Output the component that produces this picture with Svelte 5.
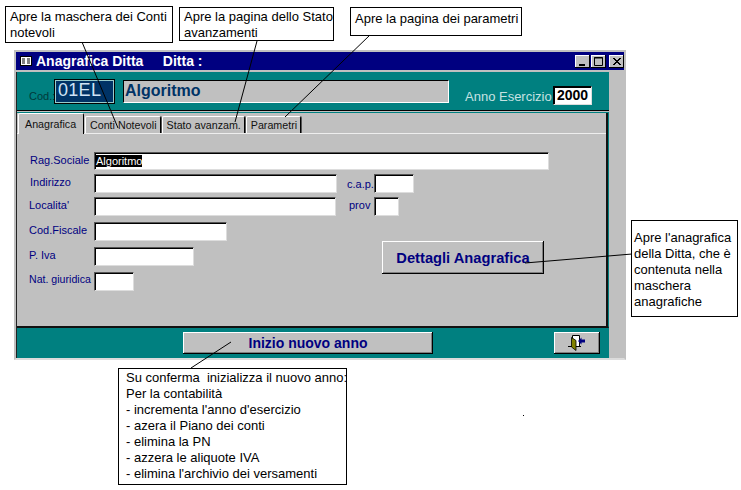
<script>
const notes = [
  { cls: 'n1', lines: ['Apre la maschera dei Conti', 'notevoli'] },
  { cls: 'n2', lines: ['Apre la pagina dello Stato', 'avanzamenti'] },
  { cls: 'n3', lines: ['Apre la pagina dei parametri'] },
  { cls: 'n4', lines: ["Apre l'anagrafica", 'della Ditta, che è', 'contenuta nella', 'maschera', 'anagrafiche'] },
  { cls: 'n5', lines: ['Su conferma  inizializza il nuovo anno:', 'Per la contabilità', "- incrementa l'anno d'esercizio", '- azera il Piano dei conti', '- elimina la PN', '- azzera le aliquote IVA', "- elimina l'archivio dei versamenti"] }
];
const leaders = [
  [82, 42, 118, 128],
  [257, 41, 235, 122],
  [370, 35, 285, 117],
  [525, 263, 632, 254],
  [231, 342, 191, 368]
];
const tabs = ['Conti Notevoli', 'Stato avanzam.', 'Parametri'];
</script>

<div class="canvas">
  <div class="window">
    <div class="titlebar">
      <svg class="formicon" width="12" height="10" viewBox="0 0 12 10">
        <rect x="0.5" y="0.5" width="11" height="9" fill="#fff" stroke="#000"/>
        <path d="M2 3h3M7 3h3M2 5h3M7 5h3M2 7h3M7 7h3" stroke="#000"/>
      </svg>
      <span class="title">Anagrafica Ditta     Ditta :</span>
      <div class="winbtns">
        <span class="wbtn"><svg width="15" height="13"><rect x="4" y="9" width="6" height="2" fill="#000"/></svg></span>
        <span class="wbtn"><svg width="15" height="13"><path d="M3.500 2.500h8v8h-8z M3 3h9" fill="none" stroke="#000"/></svg></span>
        <span class="wbtn close"><svg width="15" height="13"><path d="M4 3l7 7M5 3l7 7M11 3l-7 7M12 3l-7 7" stroke="#000"/></svg></span>
      </div>
    </div>

    <div class="body">
      <div class="main">
        <div class="header">
          <span class="codlabel">Cod.:</span>
          <span class="cod">01EL</span>
          <span class="ragione">Algoritmo</span>
          <span class="annolabel">Anno Esercizio</span>
          <span class="anno">2000</span>
        </div>

        <div class="page">
          <div class="tabs">
            <span class="tab active">Anagrafica</span>
            {#each tabs as t}
              <span class="tab">{t}</span>
            {/each}
          </div>

          <div class="form">
            <div class="row first">
              <span class="lab">Rag.Sociale</span>
              <span class="field w-rag"><em class="sel">Algoritmo</em></span>
            </div>
            <div class="row r2">
              <span class="lab">Indirizzo</span>
              <span class="field w-ind"></span>
              <span class="lab small">c.a.p.</span>
              <span class="field w-40"></span>
            </div>
            <div class="row r3">
              <span class="lab left">Localita'</span>
              <span class="field w-loc"></span>
              <span class="lab small prov">prov</span>
              <span class="field w-prov"></span>
            </div>
            <div class="lower">
              <div class="lowerfields">
                <div class="row">
                  <span class="lab left">Cod.Fiscale</span>
                  <span class="field w-cf"></span>
                </div>
                <div class="row">
                  <span class="lab left">P. Iva</span>
                  <span class="field w-iva"></span>
                </div>
                <div class="row">
                  <span class="lab left nat">Nat. giuridica</span>
                  <span class="field w-40"></span>
                </div>
              </div>
              <button class="btn dettagli">Dettagli Anagrafica</button>
            </div>
          </div>
        </div>

        <div class="footer">
          <button class="btn nuovo">Inizio nuovo anno</button>
          <button class="btn exit" aria-label="Esci">
            <svg width="18" height="16" viewBox="0 0 18 16">
              <path d="M4.500 0.500h7v11h-7z" fill="#fff" stroke="#000"/>
              <path d="M0 11.500h13" stroke="#000"/>
              <path d="M3.500 2.500l4.500 3v10l-4.500-3.500z" fill="#808000" stroke="#000" stroke-width="0.8"/>
              <path d="M10 6l3.500-3.500v2h3.500v3h-3.500v2z" fill="#000080"/>
            </svg>
          </button>
        </div>
      </div>
      <div class="strip"></div>
    </div>
  </div>

  {#each notes as n}
    <div class="note {n.cls}">
      {#each n.lines as l}
        <div>{l}</div>
      {/each}
    </div>
  {/each}

  <svg class="leaders" width="741" height="490">
    {#each leaders as [x1, y1, x2, y2]}
      <line {x1} {y1} {x2} {y2} stroke="#000" stroke-width="1"/>
    {/each}
    <rect x="523" y="415" width="1" height="1" fill="#000"/>
  </svg>
</div>

<style>
:global(body) {
  background: #fff;
  font-family: "Liberation Sans", Arial, sans-serif;
}
.canvas {
  position: relative;
  width: 741px;
  height: 490px;
  overflow: hidden;
}

/* the screenshot window */
.window {
  position: absolute;
  left: 14px;
  top: 50px;
  width: 612px;
  height: 310px;
  box-sizing: border-box;
  border: 2px solid #c0c0c0;
  border-bottom-color: #dcdcdc;
  background: #c0c0c0;
  display: flex;
  flex-direction: column;
}
.titlebar {
  height: 18px;
  flex: none;
  background: #000080;
  color: #fff;
  display: flex;
  align-items: center;
  padding-left: 4px;
}
.formicon { flex: none; }
.title {
  margin-left: 4px;
  font-size: 14px;
  font-weight: bold;
  white-space: pre;
}
.winbtns {
  margin-left: auto;
  display: flex;
}
.wbtn {
  width: 15px;
  height: 13px;
  background: #c0c0c0;
  box-shadow: inset -1px -1px 0 #000, inset 1px 1px 0 #fff;
  margin-right: 1px;
  display: block;
}
.wbtn svg { display: block; }
.wbtn.close { margin-left: 2px; margin-right: 0; }

.body {
  flex: 1;
  display: flex;
  min-height: 0;
  margin-top: 2px;
}
.main {
  width: 593px;
  flex: none;
  display: flex;
  flex-direction: column;
  border-left: 1px solid #222;
  box-sizing: border-box;
}
.strip { flex: 1; background: #c0c0c0; }

.header {
  flex: none;
  box-sizing: border-box;
  background: #008080;
  border-bottom: 1px solid #000;
  height: 39px;
  display: flex;
}
.codlabel {
  font-size: 11px;
  color: #003a3a;
  margin: 18px 0 0 12px;
  width: 25px;
  white-space: nowrap;
}
.cod {
  width: 61px;
  height: 25px;
  margin-top: 7px;
  box-sizing: border-box;
  background: #003366;
  border: 1px solid #000;
  box-shadow: inset 0 0 0 1px #9cc;
  color: #cfe3f5;
  font-size: 18px;
  letter-spacing: 0.3px;
  line-height: 21px;
  padding-left: 3px;
}
.ragione {
  width: 326px;
  height: 23px;
  margin: 8px 0 0 8px;
  box-sizing: border-box;
  background: #c0c0c0;
  border: 1px solid;
  border-color: #000 #fff #fff #000;
  color: #003366;
  font-size: 16px;
  font-weight: bold;
  line-height: 20px;
  padding-left: 1px;
}
.annolabel {
  font-size: 13px;
  color: #c6e2e2;
  margin: 17px 0 0 16px;
  width: 88px;
  white-space: nowrap;
}
.anno {
  width: 39px;
  height: 19px;
  margin-top: 14px;
  box-sizing: border-box;
  background: #fff;
  border: 1px solid;
  border-color: #000 #ddd #ddd #000;
  box-shadow: inset 1px 1px 0 #000;
  font-size: 14px;
  font-weight: bold;
  line-height: 17px;
  text-align: center;
  color: #000;
}

.page {
  flex: 1;
  min-height: 0;
  margin-top: 1px;
  background: #c0c0c0;
  border-top: 1px solid #008080;
  border-right: 1px solid #008080;
  border-bottom: 2px solid #111;
  box-sizing: border-box;
  box-shadow: inset -2px 0 0 #111;
  display: flex;
  flex-direction: column;
}
.tabs {
  display: flex;
  align-items: flex-end;
  height: 20px;
  flex: none;
  border-bottom: 1px solid #eee;
  margin-right: 2px;
}
.tab {
  box-sizing: border-box;
  height: 17px;
  font-size: 10.700px;
  line-height: 17px;
  color: #111;
  white-space: nowrap;
  padding: 0 3px 0 4px;
  margin-left: 1px;
  border-top: 1px solid #fff;
  border-left: 1px solid #fff;
  border-right: 1px solid #000;
  box-shadow: 1px 0 0 #555;
  border-radius: 2px 2px 0 0;
}
.tab.active {
  height: 21px;
  margin-bottom: -1px;
  position: relative;
  background: #c0c0c0;
  padding: 2px 6px 0 6px;
  box-shadow: none;
  width: 66px;
}
.form {
  padding: 18px 0 0 12px;
  display: flex;
  flex-direction: column;
}
.row {
  display: flex;
  align-items: flex-start;
}
.r2, .r3 { margin-top: 4px; }
.lab {
  font-size: 11px;
  color: #000080;
  width: 64px;
  margin-left: 1px;
  flex: none;
  line-height: 16px;
  white-space: nowrap;
}
.lab.left { width: 65px; margin-left: 0; }
.lab.nat { font-size: 10.600px; line-height: 14px; }
.lab.small {
  width: 37px;
  margin-left: 0;
  padding: 2px 0 0 10px;
  box-sizing: border-box;
}
.lab.prov { width: 38px; padding: 0 0 0 13px; }
.field {
  display: block;
  box-sizing: border-box;
  height: 19px;
  background: #fff;
  border: 1px solid;
  border-color: #555 #ddd #ddd #555;
  box-shadow: inset 1px 1px 0 #000;
  flex: none;
  padding: 2px 0 0 1px;
}
.w-rag { width: 455px; height: 18px; }
.w-ind { width: 243px; }
.w-loc { width: 242px; }
.w-cf { width: 133px; }
.w-iva { width: 100px; }
.w-40 { width: 40px; }
.w-prov { width: 25px; }
.sel {
  display: inline-block;
  font-style: normal;
  background: #000;
  color: #fff;
  font-size: 11px;
  line-height: 12px;
  vertical-align: top;
}
.lower {
  display: flex;
  align-items: flex-start;
  margin-top: 6px;
}
.lowerfields {
  width: 353px;
  display: flex;
  flex-direction: column;
  gap: 6px;
}
.btn {
  display: block;
  box-sizing: border-box;
  padding: 0;
  border: 0;
  background: #c0c0c0;
  box-shadow: inset -1px -1px 0 #000, inset 1px 1px 0 #fff, inset -2px -2px 0 #808080;
  font-family: inherit;
  font-weight: bold;
  color: #000080;
}
.dettagli {
  width: 162px;
  height: 33px;
  margin-top: 19px;
  font-size: 14.700px;
}
.footer {
  height: 30px;
  flex: none;
  background: #008080;
  display: flex;
  align-items: flex-start;
  padding: 4px 0 0 166px;
  box-sizing: border-box;
}
.nuovo {
  width: 250px;
  height: 22px;
  font-size: 14px;
}
.exit {
  width: 46px;
  height: 22px;
  margin-left: 121px;
  display: flex;
  align-items: center;
  justify-content: center;
}

/* call-outs, free placed over the picture */
.note {
  position: absolute;
  box-sizing: border-box;
  background: #fff;
  border: 1px solid #000;
  font-size: 13px;
  line-height: 16px;
  color: #000;
  white-space: pre;
  z-index: 1;
}
.n1 { left: 5px; top: 6px; width: 168px; height: 37px; padding: 2px 0 0 4px; }
.n2 { left: 179px; top: 7px; width: 155px; height: 34px; padding: 1px 0 0 4px; }
.n3 { left: 350px; top: 7px; width: 172px; height: 29px; padding: 3px 0 0 4px; }
.n4 { left: 631px; top: 220px; width: 107px; height: 97px; padding: 9px 0 0 2px; }
.n5 { left: 118px; top: 368px; width: 229px; height: 117px; padding: 1px 0 0 7px; }
.leaders {
  position: absolute;
  left: 0;
  top: 0;
  z-index: 2;
  pointer-events: none;
}
</style>
